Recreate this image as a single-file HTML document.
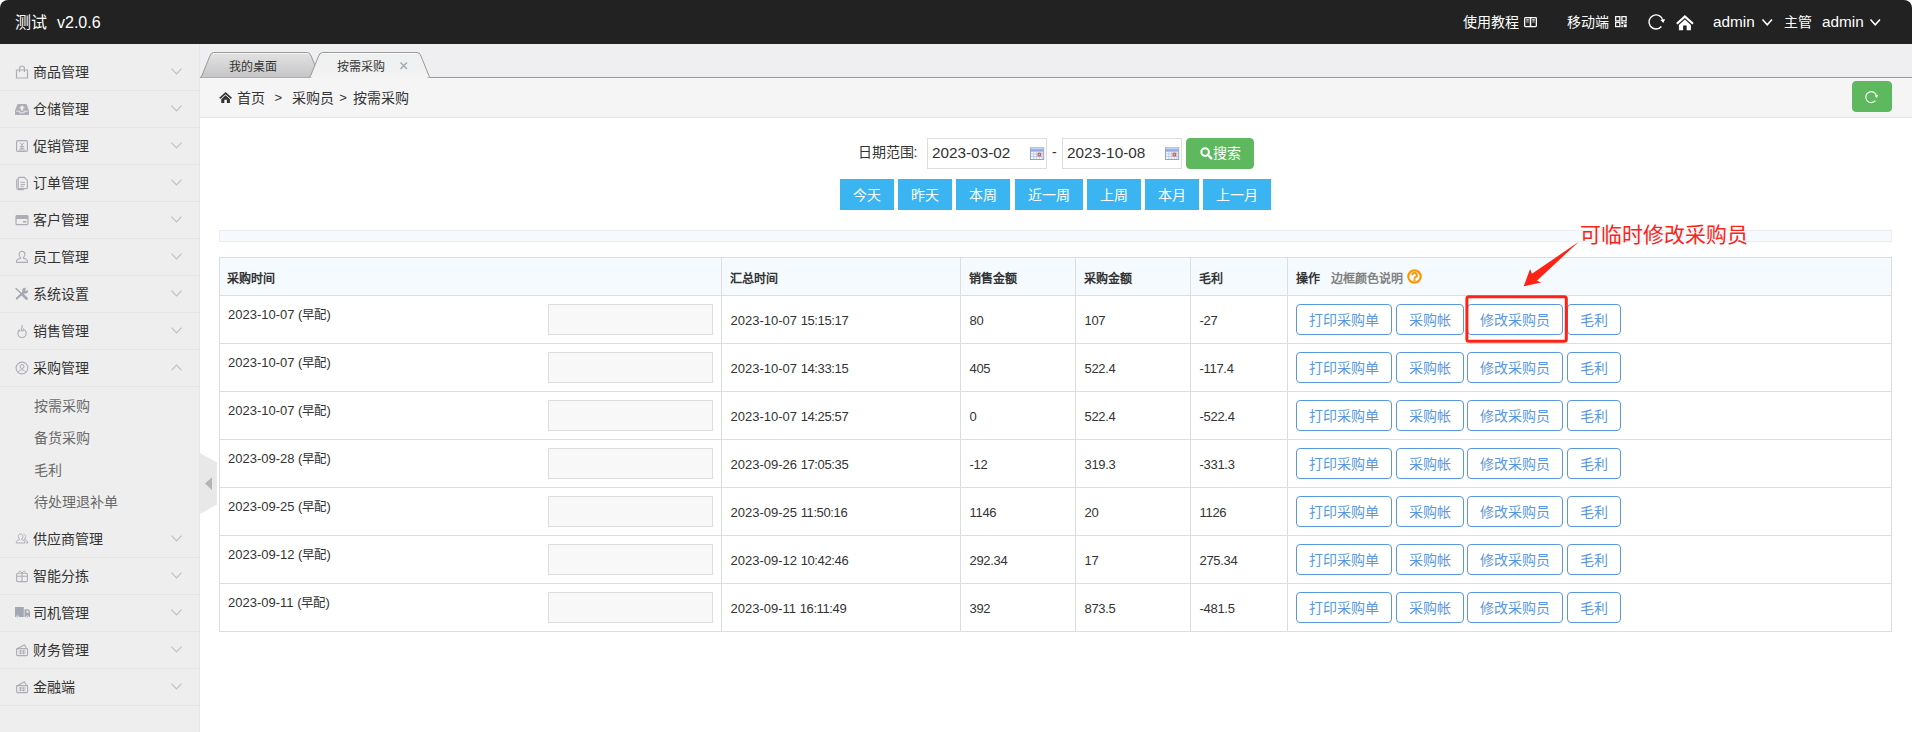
<!DOCTYPE html>
<html lang="zh-CN">
<head>
<meta charset="utf-8">
<title>按需采购</title>
<style>
*{box-sizing:border-box;margin:0;padding:0}
html,body{width:1912px;height:732px;overflow:hidden;background:#fff}
body{font-family:"Liberation Sans",sans-serif;font-size:14px;color:#333;position:relative}
.abs{position:absolute;white-space:nowrap}
svg{display:block;position:absolute;overflow:visible}
#hdr{position:absolute;left:0;top:0;width:1912px;height:44px;background:#222;border-radius:8px 8px 0 0;color:#fff}
#hdr .t{position:absolute;top:0;height:44px;line-height:44px;white-space:nowrap;color:#fff}
#aside{position:absolute;left:0;top:44px;width:200px;height:688px;background:#eee;border-right:1px solid #e5e5e5}
#aside .dt{position:absolute;left:0;width:199px;height:37px;border-bottom:1px solid #e5e5e5}
#aside .dt span{position:absolute;left:33px;top:0;line-height:37px;height:36px;font-size:14px;color:#333;white-space:nowrap}
#aside .li{position:absolute;left:34px;height:32px;line-height:32px;font-size:14px;color:#6a6a6a;white-space:nowrap}
#tabnav{position:absolute;left:200px;top:44px;width:1712px;height:34px;background:#efeef0}
#crumb{position:absolute;left:200px;top:78px;width:1712px;height:40px;background:#f5f5f5;border-bottom:1px solid #e5e5e5}
#crumb .t{position:absolute;top:0;height:39px;line-height:40px;font-size:14px;color:#333;white-space:nowrap}
.btn{position:absolute;height:31px;line-height:30px;font-size:14px;text-align:center;white-space:nowrap;border:1px solid transparent}
.btn.sec{background:#3bb4f2;border-color:#3bb4f2;color:#fff}
.btn.suc{background:#5eb95e;border-color:#5eb95e;color:#fff;border-radius:4px}
.btn.out{background:#fff;border-color:#5a98de;color:#5a98de;border-radius:4px}
.inp{position:absolute;height:31px;border:1px solid #ddd;background:#fff;font-size:15.3px;line-height:28.4px;color:#333;padding-left:4px;white-space:nowrap}
.th{position:absolute;top:258px;height:37px;line-height:42px;font-size:12px;font-weight:bold;color:#333;white-space:nowrap}
.td{position:absolute;height:20px;line-height:21px;font-size:13px;color:#333;white-space:nowrap}

</style>
</head>
<body>
<div id="hdr">
<div class="t" style="left:15px;font-size:16px;line-height:46px">测试</div>
<div class="t" style="left:57px;font-size:16px;line-height:46px">v2.0.6</div>
<div class="t" style="left:1463px;font-size:14px">使用教程</div>
<svg style="left:1524.3px;top:16.7px;width:13px;height:10.2px" viewBox="0 0 13 10.2" ><rect x="0.65" y="0.65" width="11.7" height="8.9" rx="0.8" fill="none" stroke="#fff" stroke-width="1.3"/><path d="M6.5 0.6V9.6" stroke="#fff" stroke-width="1.5"/><path d="M2.2 2.9h2.6M8.2 2.9h2.6" stroke="#fff" stroke-width="1.2"/><path d="M2.2 5h2.6M8.2 5h2.6" stroke="#ddd" stroke-width="0.9"/></svg>
<div class="t" style="left:1567px;font-size:14px">移动端</div>
<svg style="left:1614.6px;top:16.1px;width:11.8px;height:11.3px" viewBox="0 0 11.8 11.3" ><g fill="none" stroke="#fff" stroke-width="1.25"><rect x="0.65" y="0.65" width="4.2" height="4.2"/><rect x="6.9" y="0.65" width="4.2" height="4.2"/><rect x="0.65" y="6.4" width="4.2" height="4.2"/></g><g fill="#fff"><rect x="6.3" y="5.9" width="2.1" height="2.1"/><rect x="9.5" y="5.9" width="2.2" height="1.5"/><rect x="6.3" y="9.2" width="1.5" height="2"/><rect x="8.7" y="8.3" width="3" height="2.9"/></g></svg>
<svg style="left:1647.9px;top:14.2px;width:16px;height:16px" viewBox="0 0 16 16" ><path d="M13.40 12.53A7.05 7.05 0 1 1 14.90 6.53" fill="none" stroke="#fff" stroke-width="1.4"/><path d="M15.45 9.1L17.0 5.0L12.4 6.0Z" fill="#fff"/></svg>
<svg style="left:1675.7px;top:14.6px;width:17.8px;height:15.2px" viewBox="0 0 18 15.5" ><path d="M9 0L0 8.2L1.5 9.8L9 3L16.5 9.8L18 8.2Z" fill="#fff"/><path d="M9 4.6L2.9 10.1V15.5H7.2V10.8H10.8V15.5H15.1V10.1Z" fill="#fff"/></svg>
<div class="t" style="left:1713px;font-size:15.3px">admin</div>
<svg style="left:1761.8px;top:18.8px;width:10.5px;height:6.4px" viewBox="0 0 10.5 6.4" ><path d="M0.5 0.5L5.25 5.800000000000001L10.0 0.5" fill="none" stroke="#fff" stroke-width="1.6"/></svg>
<div class="t" style="left:1784px;font-size:14px">主管</div>
<div class="t" style="left:1822px;font-size:15.3px">admin</div>
<svg style="left:1870.2px;top:18.8px;width:10.5px;height:6.4px" viewBox="0 0 10.5 6.4" ><path d="M0.5 0.5L5.25 5.800000000000001L10.0 0.5" fill="none" stroke="#fff" stroke-width="1.6"/></svg>
</div>
<div id="aside">
<div class="dt" style="top:10px"><svg style="left:15px;top:11px;width:14px;height:14px" viewBox="0 0 14 14" ><path d="M1.5 5h11v8h-11z" fill="none" stroke="#adadb7" stroke-width="1.2"/><path d="M4.6 7V3.4a2.4 2.4 0 0 1 4.8 0V7" fill="none" stroke="#adadb7" stroke-width="1.2"/></svg><span>商品管理</span><svg style="left:171.0px;top:13.6px;width:11px;height:7px" viewBox="0 0 11 7" ><path d="M0.5 0.700L5.500 6L10.500 0.700" fill="none" stroke="#b9c0c9" stroke-width="1.100"/></svg></div>
<div class="dt" style="top:47px"><svg style="left:15px;top:11px;width:14px;height:14px" viewBox="0 0 14 14" ><path d="M2.6 2h8.8L14 8.5V13H0V8.5Z" fill="#adadb7"/><path d="M7 3.2L10 6.2H8.1V8.6H5.9V6.2H4Z" fill="#eee"/><path d="M1.2 9.2h3.6v1.6h4.4V9.2h3.6" fill="none" stroke="#eee" stroke-width="0.9"/></svg><span>仓储管理</span><svg style="left:171.0px;top:13.6px;width:11px;height:7px" viewBox="0 0 11 7" ><path d="M0.5 0.700L5.500 6L10.500 0.700" fill="none" stroke="#b9c0c9" stroke-width="1.100"/></svg></div>
<div class="dt" style="top:84px"><svg style="left:15px;top:11px;width:14px;height:14px" viewBox="0 0 14 14" ><rect x="1.6" y="1.6" width="10.8" height="10.8" rx="1.2" fill="none" stroke="#adadb7" stroke-width="1.2"/><path d="M5 3.6L7 6L9 3.6M7 6V10.4M4.8 7.4h4.4M4.8 9.2h4.4M3.8 10.9h6.4" fill="none" stroke="#adadb7" stroke-width="1"/></svg><span>促销管理</span><svg style="left:171.0px;top:13.6px;width:11px;height:7px" viewBox="0 0 11 7" ><path d="M0.5 0.700L5.500 6L10.500 0.700" fill="none" stroke="#b9c0c9" stroke-width="1.100"/></svg></div>
<div class="dt" style="top:121px"><svg style="left:15px;top:11px;width:14px;height:14px" viewBox="0 0 14 14" ><path d="M4.2 1.4h5.2l3 3V11.6a1 1 0 0 1-1 1H4.2a1 1 0 0 1-1-1V2.4a1 1 0 0 1 1-1z" fill="none" stroke="#adadb7" stroke-width="1.2"/><path d="M1.7 3.2V12a1.6 1.6 0 0 0 1.6 1.6H9" fill="none" stroke="#adadb7" stroke-width="1.1"/><path d="M5.6 6.4h4.4M5.6 8.6h4.4M5.6 10.6h3" stroke="#adadb7" stroke-width="1"/></svg><span>订单管理</span><svg style="left:171.0px;top:13.6px;width:11px;height:7px" viewBox="0 0 11 7" ><path d="M0.5 0.700L5.500 6L10.500 0.700" fill="none" stroke="#b9c0c9" stroke-width="1.100"/></svg></div>
<div class="dt" style="top:158px"><svg style="left:15px;top:11px;width:14px;height:14px" viewBox="0 0 14 14" ><rect x="1" y="2.6" width="12" height="9" rx="1.2" fill="none" stroke="#adadb7" stroke-width="1.2"/><rect x="1" y="2.6" width="12" height="3.4" fill="#adadb7"/><rect x="8" y="8" width="3.4" height="1.6" fill="#adadb7"/></svg><span>客户管理</span><svg style="left:171.0px;top:13.6px;width:11px;height:7px" viewBox="0 0 11 7" ><path d="M0.5 0.700L5.500 6L10.500 0.700" fill="none" stroke="#b9c0c9" stroke-width="1.100"/></svg></div>
<div class="dt" style="top:195px"><svg style="left:15px;top:11px;width:14px;height:14px" viewBox="0 0 14 14" ><path d="M7 1.2c1.8 0 2.9 1.3 2.9 3.1 0 1.3-.6 2.6-1.5 3.2v.8c2.2.5 4 1.4 4 2.8v1.3H1.6v-1.3c0-1.4 1.8-2.3 4-2.8v-.8C4.7 6.9 4.1 5.6 4.1 4.3c0-1.8 1.1-3.1 2.9-3.1z" fill="none" stroke="#adadb7" stroke-width="1.1"/></svg><span>员工管理</span><svg style="left:171.0px;top:13.6px;width:11px;height:7px" viewBox="0 0 11 7" ><path d="M0.5 0.700L5.500 6L10.500 0.700" fill="none" stroke="#b9c0c9" stroke-width="1.100"/></svg></div>
<div class="dt" style="top:232px"><svg style="left:15px;top:11px;width:14px;height:14px" viewBox="0 0 14 14" ><g stroke="#a3a8b2" fill="none" stroke-linecap="round"><path d="M1.1 1.5L6.3 6.5" stroke-width="1.4"/><path d="M7.4 7.6L11.5 11.5" stroke-width="2.7"/><path d="M1.8 11.5L8.6 5" stroke-width="2.1"/></g><circle cx="10.1" cy="3.7" r="2.9" fill="#a3a8b2"/><path d="M10.1 3.9L11.2 -0.2L14.2 2.8Z" fill="#eee"/></svg><span>系统设置</span><svg style="left:171.0px;top:13.6px;width:11px;height:7px" viewBox="0 0 11 7" ><path d="M0.5 0.700L5.500 6L10.500 0.700" fill="none" stroke="#b9c0c9" stroke-width="1.100"/></svg></div>
<div class="dt" style="top:269px"><svg style="left:15px;top:11px;width:14px;height:14px" viewBox="0 0 14 14" ><path d="M7.2 1.2c.4 2-1 2.9-1 4.4 0 .8.5 1.3 1.1 1.3.9 0 1.3-.9 1-2 1.6 1 2.9 2.7 2.9 4.4a4.2 4.2 0 0 1-8.4 0c0-1.5.8-2.6 1.4-3.4.2 1 .7 1.5 1.1 1.5" fill="none" stroke="#adadb7" stroke-width="1.1" stroke-linejoin="round"/></svg><span>销售管理</span><svg style="left:171.0px;top:13.6px;width:11px;height:7px" viewBox="0 0 11 7" ><path d="M0.5 0.700L5.500 6L10.500 0.700" fill="none" stroke="#b9c0c9" stroke-width="1.100"/></svg></div>
<div class="dt" style="top:306px"><svg style="left:15px;top:11px;width:14px;height:14px" viewBox="0 0 14 14" ><circle cx="7" cy="7" r="5.9" fill="none" stroke="#adadb7" stroke-width="1.1"/><circle cx="7" cy="5.5" r="2" fill="none" stroke="#adadb7" stroke-width="1"/><path d="M3.4 11.4c.4-1.7 1.8-2.6 3.6-2.6s3.2.9 3.6 2.6" fill="none" stroke="#adadb7" stroke-width="1"/></svg><span>采购管理</span><svg style="left:171.0px;top:13.6px;width:11px;height:7px" viewBox="0 0 11 7" ><path d="M0.5 6.300L5.500 1L10.500 6.300" fill="none" stroke="#b9c0c9" stroke-width="1.100"/></svg></div>
<div class="li" style="top:346px">按需采购</div>
<div class="li" style="top:378px">备货采购</div>
<div class="li" style="top:410px">毛利</div>
<div class="li" style="top:442px">待处理退补单</div>
<div class="dt" style="top:477px"><svg style="left:15px;top:11px;width:14px;height:14px" viewBox="0 0 14 14" ><path d="M5.6 2c1.4 0 2.3 1 2.3 2.5 0 1-.5 2-1.2 2.5v.7c1.8.4 3.2 1.100 3.2 2.3v1H1.300v-1c0-1.200 1.4-1.900 3.2-2.300v-.7C3.800 6.500 3.300 5.500 3.300 4.500 3.300 3 4.200 2 5.600 2z" fill="none" stroke="#adadb7" stroke-width="1"/><path d="M8.6 2.100c1.3.1 2.100 1.100 2.100 2.400 0 1-.5 2-1.200 2.500v.7c1.800.4 3.200 1.100 3.200 2.300v1h-1.800" fill="none" stroke="#adadb7" stroke-width="1"/></svg><span>供应商管理</span><svg style="left:171.0px;top:13.6px;width:11px;height:7px" viewBox="0 0 11 7" ><path d="M0.5 0.700L5.500 6L10.500 0.700" fill="none" stroke="#b9c0c9" stroke-width="1.100"/></svg></div>
<div class="dt" style="top:514px"><svg style="left:15px;top:11px;width:14px;height:14px" viewBox="0 0 14 14" ><rect x="1.6" y="4.200" width="10.800" height="8.400" rx="1" fill="none" stroke="#adadb7" stroke-width="1.100"/><path d="M1.600 7.200h10.800M7 4.200v8.400" stroke="#adadb7" stroke-width="1.100"/><path d="M7 4.200C5.800 1.400 3.400 1.800 4 3.400M7 4.200c1.200-2.800 3.600-2.400 3 -.8" fill="none" stroke="#adadb7" stroke-width="1"/></svg><span>智能分拣</span><svg style="left:171.0px;top:13.6px;width:11px;height:7px" viewBox="0 0 11 7" ><path d="M0.5 0.700L5.500 6L10.500 0.700" fill="none" stroke="#b9c0c9" stroke-width="1.100"/></svg></div>
<div class="dt" style="top:551px"><svg style="left:15px;top:11px;width:14px;height:14px" viewBox="0 0 14 14" ><g fill="#a1a7b3"><path d="M0 1h8.800v10H0z"/><path d="M9.500 3.200h3.200c1.600 0 2.400 1.800 2.400 3.600V11H9.500z"/></g><path d="M11.500 4.400h1.200c.6.300.9 1.300 1 2.300h-2.200z" fill="#eee"/><circle cx="2.700" cy="10.800" r="1.350" fill="#eee"/><circle cx="12.300" cy="10.800" r="1.350" fill="#eee"/><circle cx="2.700" cy="10.900" r=".65" fill="#a1a7b3"/><circle cx="12.300" cy="10.900" r=".65" fill="#a1a7b3"/></svg><span>司机管理</span><svg style="left:171.0px;top:13.6px;width:11px;height:7px" viewBox="0 0 11 7" ><path d="M0.5 0.700L5.500 6L10.500 0.700" fill="none" stroke="#b9c0c9" stroke-width="1.100"/></svg></div>
<div class="dt" style="top:588px"><svg style="left:15px;top:11px;width:14px;height:14px" viewBox="0 0 14 14" ><path d="M1.400 6.200L9.400 1.800l2 3.400" fill="none" stroke="#adadb7" stroke-width="1.100" stroke-linejoin="round"/><rect x="1.600" y="5.600" width="11" height="7" rx=".8" fill="none" stroke="#adadb7" stroke-width="1.100"/><path d="M3.600 8h7M3.600 10.200h7M5.600 7v4.400M8.600 7v4.400" stroke="#adadb7" stroke-width=".9"/></svg><span>财务管理</span><svg style="left:171.0px;top:13.6px;width:11px;height:7px" viewBox="0 0 11 7" ><path d="M0.5 0.700L5.500 6L10.500 0.700" fill="none" stroke="#b9c0c9" stroke-width="1.100"/></svg></div>
<div class="dt" style="top:625px"><svg style="left:15px;top:11px;width:14px;height:14px" viewBox="0 0 14 14" ><path d="M1.400 6.200L9.400 1.800l2 3.400" fill="none" stroke="#adadb7" stroke-width="1.100" stroke-linejoin="round"/><rect x="1.600" y="5.600" width="11" height="7" rx=".8" fill="none" stroke="#adadb7" stroke-width="1.100"/><path d="M3.600 8h7M3.600 10.200h7M5.600 7v4.400M8.600 7v4.400" stroke="#adadb7" stroke-width=".9"/></svg><span>金融端</span><svg style="left:171.0px;top:13.6px;width:11px;height:7px" viewBox="0 0 11 7" ><path d="M0.5 0.700L5.500 6L10.500 0.700" fill="none" stroke="#b9c0c9" stroke-width="1.100"/></svg></div>
</div>
<div id="tabnav">
<svg style="left:0px;top:0px;width:1712px;height:34px" viewBox="0 0 1712 34" ><defs><linearGradient id="tg1" x1="0" y1="0" x2="0" y2="1"><stop offset="0" stop-color="#e3e3e3"/><stop offset="1" stop-color="#c5c5c7"/></linearGradient><linearGradient id="tg2" x1="0" y1="0" x2="0" y2="1"><stop offset="0" stop-color="#eef0f0"/><stop offset="0.8" stop-color="#f1f1f2"/><stop offset="1" stop-color="#f5f5f5"/></linearGradient></defs><path d="M0 33.500H1712" stroke="#999" stroke-width="1"/><path d="M0.09999999999999998 33.5 Q1.2 33.5 1.8 31.9 L9.799999999999999 12.1 Q10.899999999999999 8.5 13.799999999999999 8.5 L107.2 8.5 Q110.1 8.5 111.2 12.1 L119.19999999999999 31.9 Q119.8 33.5 120.89999999999999 33.5" fill="url(#tg1)" stroke="#999" stroke-width="1"/><path d="M13 9.5H108.5" stroke="#fff" stroke-opacity="0.65" stroke-width="1"/><path d="M108.8 33.5 Q109.89999999999999 33.5 110.5 31.9 L118.6 12.1 Q119.7 8.5 122.6 8.5 L217.0 8.5 Q219.9 8.5 221.0 12.1 L229.0 31.9 Q229.6 33.5 230.70000000000002 33.5Z" fill="url(#tg2)"/><path d="M112 33.500H227" stroke="#f5f5f5" stroke-width="1.200"/><path d="M122 9.5H218" stroke="#fff" stroke-opacity="0.9" stroke-width="1"/><path d="M108.8 33.5 Q109.89999999999999 33.5 110.5 31.9 L118.6 12.1 Q119.7 8.5 122.6 8.5 L217.0 8.5 Q219.9 8.5 221.0 12.1 L229.0 31.9 Q229.6 33.5 230.70000000000002 33.5" fill="none" stroke="#999" stroke-width="1"/></svg>
<div class="abs" style="left:28.6px;top:9px;height:26px;line-height:28px;font-size:12px;color:#333">我的桌面</div>
<div class="abs" style="left:136.6px;top:9px;height:26px;line-height:28px;font-size:12px;color:#333">按需采购</div>
<svg style="left:199.8px;top:18px;width:7.5px;height:7.5px" viewBox="0 0 7.5 7.5" ><path d="M0.500 0.500L7.0 7.0M7.0 0.500L0.500 7.0" stroke="#a6abb5" stroke-width="1.600"/></svg>
</div>
<div id="crumb">
<svg style="left:18.9px;top:14px;width:13.2px;height:11px" viewBox="0 0 18 15.5" ><path d="M9 0L0 8.2L1.5 9.8L9 3L16.5 9.8L18 8.2Z" fill="#333"/><path d="M9 4.6L2.9 10.1V15.5H7.2V10.8H10.8V15.5H15.1V10.1Z" fill="#333"/></svg>
<div class="t" style="left:37px">首页</div>
<div class="t" style="left:74.6px;font-size:13px;color:#333">&gt;</div>
<div class="t" style="left:91.5px">采购员</div>
<div class="t" style="left:139.3px;font-size:13px;color:#333">&gt;</div>
<div class="t" style="left:152.5px">按需采购</div>
<div class="btn suc" style="left:1652px;top:3px;width:40px"></div>
<svg style="left:1665.0px;top:12.5px;width:12.4px;height:12.4px" viewBox="0 0 16 16" ><path d="M13.40 12.53A7.05 7.05 0 1 1 14.90 6.53" fill="none" stroke="#fff" stroke-width="1.4838709677419353"/><path d="M15.45 9.1L17.0 5.0L12.4 6.0Z" fill="#fff"/></svg>
</div>
<div id="content">
<div class="abs" style="left:857.5px;top:138px;height:29px;line-height:29px;font-size:14px;color:#333">日期范围:</div>
<div class="inp" style="left:927px;top:138px;width:120px">2023-03-02</div>
<svg style="left:1029.5px;top:147px;width:14.2px;height:13px" viewBox="0 0 14.2 13" ><defs><linearGradient id="cg1" x1="0" y1="0" x2="0" y2="1"><stop offset="0" stop-color="#a9c1ee"/><stop offset="1" stop-color="#7f9fdf"/></linearGradient></defs><rect x="0.5" y="0.5" width="13.2" height="12" fill="#f4f7fd" stroke="#93a3c4" stroke-width="1"/><rect x="0.5" y="0" width="13.2" height="1.6" fill="#c9c9cc"/><rect x="1" y="1.6" width="12.2" height="3" fill="url(#cg1)"/><path d="M1 6.9h12.2M1 9.5h12.2M3.8 4.6v7.4M6.6 4.6v7.4M9.4 4.6v7.4M11.9 4.6v7.4" stroke="#b3c4e6" stroke-width=".8"/><rect x="7.6" y="5.7" width="3.5" height="3.7" fill="#e2564a"/><rect x="8.7" y="6.8" width="1.3" height="1.5" fill="#f6b9b0"/></svg>
<div class="abs" style="left:1052px;top:138px;height:29px;line-height:29px;font-size:14px;color:#333">-</div>
<div class="inp" style="left:1062px;top:138px;width:120px">2023-10-08</div>
<svg style="left:1164.5px;top:147px;width:14.2px;height:13px" viewBox="0 0 14.2 13" ><defs><linearGradient id="cg2" x1="0" y1="0" x2="0" y2="1"><stop offset="0" stop-color="#a9c1ee"/><stop offset="1" stop-color="#7f9fdf"/></linearGradient></defs><rect x="0.5" y="0.5" width="13.2" height="12" fill="#f4f7fd" stroke="#93a3c4" stroke-width="1"/><rect x="0.5" y="0" width="13.2" height="1.6" fill="#c9c9cc"/><rect x="1" y="1.6" width="12.2" height="3" fill="url(#cg2)"/><path d="M1 6.9h12.2M1 9.5h12.2M3.8 4.6v7.4M6.6 4.6v7.4M9.4 4.6v7.4M11.9 4.6v7.4" stroke="#b3c4e6" stroke-width=".8"/><rect x="7.6" y="5.7" width="3.5" height="3.7" fill="#e2564a"/><rect x="8.7" y="6.8" width="1.3" height="1.5" fill="#f6b9b0"/></svg>
<div class="btn suc" style="left:1186px;top:138px;width:68px"></div>
<svg style="left:1199.6px;top:147.2px;width:12.3px;height:12.3px" viewBox="0 0 12 12" ><circle cx="5" cy="5" r="3.700" fill="none" stroke="#fff" stroke-width="2"/><path d="M7.800 7.800L11 11" stroke="#fff" stroke-width="2.400" stroke-linecap="round"/></svg>
<div class="abs" style="left:1213px;top:139px;height:29px;line-height:29px;font-size:14px;color:#fff">搜索</div>
<div class="btn sec" style="left:840px;top:179px;width:54px">今天</div>
<div class="btn sec" style="left:898px;top:179px;width:54px">昨天</div>
<div class="btn sec" style="left:956px;top:179px;width:54px">本周</div>
<div class="btn sec" style="left:1015px;top:179px;width:68px">近一周</div>
<div class="btn sec" style="left:1087px;top:179px;width:54px">上周</div>
<div class="btn sec" style="left:1145px;top:179px;width:54px">本月</div>
<div class="btn sec" style="left:1203px;top:179px;width:68px">上一月</div>
<div class="abs" style="left:219px;top:230px;width:1673px;height:12px;background:#f5fafe;border:1px solid #eee"></div>
<div class="abs" style="left:219px;top:257px;width:1673px;height:375px;border:1px solid #ddd;background:#fff"></div>
<div class="abs" style="left:220px;top:258px;width:1671px;height:37px;background:#f5fafe"></div>
<div class="abs" style="left:219px;top:295px;width:1673px;height:1px;background:#ddd"></div>
<div class="abs" style="left:219px;top:343px;width:1673px;height:1px;background:#ddd"></div>
<div class="abs" style="left:219px;top:391px;width:1673px;height:1px;background:#ddd"></div>
<div class="abs" style="left:219px;top:439px;width:1673px;height:1px;background:#ddd"></div>
<div class="abs" style="left:219px;top:487px;width:1673px;height:1px;background:#ddd"></div>
<div class="abs" style="left:219px;top:535px;width:1673px;height:1px;background:#ddd"></div>
<div class="abs" style="left:219px;top:583px;width:1673px;height:1px;background:#ddd"></div>
<div class="abs" style="left:721px;top:257px;width:1px;height:375px;background:#ddd"></div>
<div class="abs" style="left:960px;top:257px;width:1px;height:375px;background:#ddd"></div>
<div class="abs" style="left:1075px;top:257px;width:1px;height:375px;background:#ddd"></div>
<div class="abs" style="left:1190px;top:257px;width:1px;height:375px;background:#ddd"></div>
<div class="abs" style="left:1287px;top:257px;width:1px;height:375px;background:#ddd"></div>
<div class="th" style="left:227.4px">采购时间</div>
<div class="th" style="left:729.8px">汇总时间</div>
<div class="th" style="left:968.8px">销售金额</div>
<div class="th" style="left:1083.8px">采购金额</div>
<div class="th" style="left:1198.8px">毛利</div>
<div class="th" style="left:1295.8px">操作</div>
<div class="th" style="left:1330.6px;color:#828282">边框颜色说明</div>
<svg style="left:1407px;top:268.8px;width:15px;height:15px" viewBox="0 0 15 15" ><circle cx="7.5" cy="7.5" r="6.2" fill="none" stroke="#ff9800" stroke-width="2.2"/><path d="M5.2 6.2a2.3 2.3 0 1 1 3.5 1.9c-.8.5-1.2.8-1.2 1.6" fill="none" stroke="#ff9800" stroke-width="2"/><circle cx="7.5" cy="11.2" r="1.1" fill="#ff9800"/></svg>
<div class="td" style="left:228px;top:304px">2023-10-07 (<span style="font-size:12.4px">早配</span>)</div>
<div class="abs" style="left:548px;top:304px;width:165px;height:31px;border:1px solid #ddd;background:#f8f8f8"></div>
<div class="td" style="left:730.5px;top:296px;height:47px;line-height:49px">2023-10-07 <span style="letter-spacing:-0.37px">15:15:17</span></div>
<div class="td" style="left:969.5px;top:296px;height:47px;line-height:49px;letter-spacing:-0.3px">80</div>
<div class="td" style="left:1084.5px;top:296px;height:47px;line-height:49px;letter-spacing:-0.3px">107</div>
<div class="td" style="left:1199.5px;top:296px;height:47px;line-height:49px;letter-spacing:-0.3px">-27</div>
<div class="btn out" style="left:1296px;top:304px;width:96px">打印采购单</div>
<div class="btn out" style="left:1396px;top:304px;width:68px">采购帐</div>
<div class="btn out" style="left:1467px;top:304px;width:96px">修改采购员</div>
<div class="btn out" style="left:1567px;top:304px;width:54px">毛利</div>
<div class="td" style="left:228px;top:352px">2023-10-07 (<span style="font-size:12.4px">早配</span>)</div>
<div class="abs" style="left:548px;top:352px;width:165px;height:31px;border:1px solid #ddd;background:#f8f8f8"></div>
<div class="td" style="left:730.5px;top:344px;height:47px;line-height:49px">2023-10-07 <span style="letter-spacing:-0.37px">14:33:15</span></div>
<div class="td" style="left:969.5px;top:344px;height:47px;line-height:49px;letter-spacing:-0.3px">405</div>
<div class="td" style="left:1084.5px;top:344px;height:47px;line-height:49px;letter-spacing:-0.3px">522.4</div>
<div class="td" style="left:1199.5px;top:344px;height:47px;line-height:49px;letter-spacing:-0.3px">-117.4</div>
<div class="btn out" style="left:1296px;top:352px;width:96px">打印采购单</div>
<div class="btn out" style="left:1396px;top:352px;width:68px">采购帐</div>
<div class="btn out" style="left:1467px;top:352px;width:96px">修改采购员</div>
<div class="btn out" style="left:1567px;top:352px;width:54px">毛利</div>
<div class="td" style="left:228px;top:400px">2023-10-07 (<span style="font-size:12.4px">早配</span>)</div>
<div class="abs" style="left:548px;top:400px;width:165px;height:31px;border:1px solid #ddd;background:#f8f8f8"></div>
<div class="td" style="left:730.5px;top:392px;height:47px;line-height:49px">2023-10-07 <span style="letter-spacing:-0.37px">14:25:57</span></div>
<div class="td" style="left:969.5px;top:392px;height:47px;line-height:49px;letter-spacing:-0.3px">0</div>
<div class="td" style="left:1084.5px;top:392px;height:47px;line-height:49px;letter-spacing:-0.3px">522.4</div>
<div class="td" style="left:1199.5px;top:392px;height:47px;line-height:49px;letter-spacing:-0.3px">-522.4</div>
<div class="btn out" style="left:1296px;top:400px;width:96px">打印采购单</div>
<div class="btn out" style="left:1396px;top:400px;width:68px">采购帐</div>
<div class="btn out" style="left:1467px;top:400px;width:96px">修改采购员</div>
<div class="btn out" style="left:1567px;top:400px;width:54px">毛利</div>
<div class="td" style="left:228px;top:448px">2023-09-28 (<span style="font-size:12.4px">早配</span>)</div>
<div class="abs" style="left:548px;top:448px;width:165px;height:31px;border:1px solid #ddd;background:#f8f8f8"></div>
<div class="td" style="left:730.5px;top:440px;height:47px;line-height:49px">2023-09-26 <span style="letter-spacing:-0.37px">17:05:35</span></div>
<div class="td" style="left:969.5px;top:440px;height:47px;line-height:49px;letter-spacing:-0.3px">-12</div>
<div class="td" style="left:1084.5px;top:440px;height:47px;line-height:49px;letter-spacing:-0.3px">319.3</div>
<div class="td" style="left:1199.5px;top:440px;height:47px;line-height:49px;letter-spacing:-0.3px">-331.3</div>
<div class="btn out" style="left:1296px;top:448px;width:96px">打印采购单</div>
<div class="btn out" style="left:1396px;top:448px;width:68px">采购帐</div>
<div class="btn out" style="left:1467px;top:448px;width:96px">修改采购员</div>
<div class="btn out" style="left:1567px;top:448px;width:54px">毛利</div>
<div class="td" style="left:228px;top:496px">2023-09-25 (<span style="font-size:12.4px">早配</span>)</div>
<div class="abs" style="left:548px;top:496px;width:165px;height:31px;border:1px solid #ddd;background:#f8f8f8"></div>
<div class="td" style="left:730.5px;top:488px;height:47px;line-height:49px">2023-09-25 <span style="letter-spacing:-0.37px">11:50:16</span></div>
<div class="td" style="left:969.5px;top:488px;height:47px;line-height:49px;letter-spacing:-0.3px">1146</div>
<div class="td" style="left:1084.5px;top:488px;height:47px;line-height:49px;letter-spacing:-0.3px">20</div>
<div class="td" style="left:1199.5px;top:488px;height:47px;line-height:49px;letter-spacing:-0.3px">1126</div>
<div class="btn out" style="left:1296px;top:496px;width:96px">打印采购单</div>
<div class="btn out" style="left:1396px;top:496px;width:68px">采购帐</div>
<div class="btn out" style="left:1467px;top:496px;width:96px">修改采购员</div>
<div class="btn out" style="left:1567px;top:496px;width:54px">毛利</div>
<div class="td" style="left:228px;top:544px">2023-09-12 (<span style="font-size:12.4px">早配</span>)</div>
<div class="abs" style="left:548px;top:544px;width:165px;height:31px;border:1px solid #ddd;background:#f8f8f8"></div>
<div class="td" style="left:730.5px;top:536px;height:47px;line-height:49px">2023-09-12 <span style="letter-spacing:-0.37px">10:42:46</span></div>
<div class="td" style="left:969.5px;top:536px;height:47px;line-height:49px;letter-spacing:-0.3px">292.34</div>
<div class="td" style="left:1084.5px;top:536px;height:47px;line-height:49px;letter-spacing:-0.3px">17</div>
<div class="td" style="left:1199.5px;top:536px;height:47px;line-height:49px;letter-spacing:-0.3px">275.34</div>
<div class="btn out" style="left:1296px;top:544px;width:96px">打印采购单</div>
<div class="btn out" style="left:1396px;top:544px;width:68px">采购帐</div>
<div class="btn out" style="left:1467px;top:544px;width:96px">修改采购员</div>
<div class="btn out" style="left:1567px;top:544px;width:54px">毛利</div>
<div class="td" style="left:228px;top:592px">2023-09-11 (<span style="font-size:12.4px">早配</span>)</div>
<div class="abs" style="left:548px;top:592px;width:165px;height:31px;border:1px solid #ddd;background:#f8f8f8"></div>
<div class="td" style="left:730.5px;top:584px;height:47px;line-height:49px">2023-09-11 <span style="letter-spacing:-0.37px">16:11:49</span></div>
<div class="td" style="left:969.5px;top:584px;height:47px;line-height:49px;letter-spacing:-0.3px">392</div>
<div class="td" style="left:1084.5px;top:584px;height:47px;line-height:49px;letter-spacing:-0.3px">873.5</div>
<div class="td" style="left:1199.5px;top:584px;height:47px;line-height:49px;letter-spacing:-0.3px">-481.5</div>
<div class="btn out" style="left:1296px;top:592px;width:96px">打印采购单</div>
<div class="btn out" style="left:1396px;top:592px;width:68px">采购帐</div>
<div class="btn out" style="left:1467px;top:592px;width:96px">修改采购员</div>
<div class="btn out" style="left:1567px;top:592px;width:54px">毛利</div>
<svg style="left:0px;top:0px;width:1912px;height:732px" viewBox="0 0 1912 732" pointer-events="none"><rect x="1466.9" y="296.7" width="99.4" height="44.6" rx="2" fill="none" stroke="#ff2316" stroke-width="3"/><path d="M1578.700 241.800L1532 273.800L1530.100 269.100L1523.700 286.300L1541.200 282.400L1536.900 280.800Z" fill="#ff2316"/></svg>
<div class="abs" style="left:1580px;top:220.5px;height:28px;line-height:28px;font-size:20.9px;font-weight:300;color:#ff2316">可临时修改采购员</div>
<svg style="left:200px;top:453px;width:17px;height:61px" viewBox="0 0 17 61" ><path d="M0 0L17 9.500V51.500L0 61Z" fill="#e8e8e8"/><path d="M12 24.300V37L5 30.600Z" fill="#b4b4b4"/></svg>
</div>
</body>
</html>
